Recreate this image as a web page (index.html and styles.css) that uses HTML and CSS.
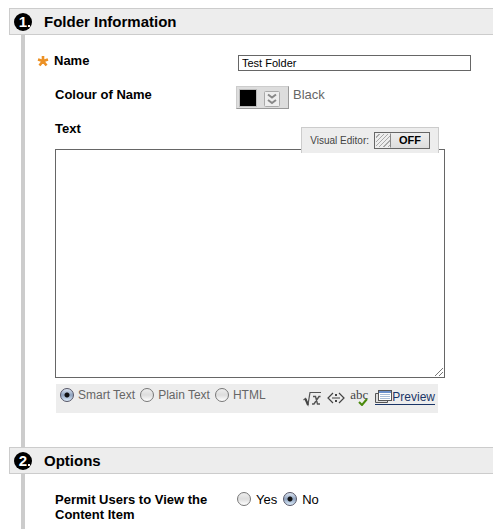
FILE: index.html
```html
<!DOCTYPE html>
<html lang="en">
<head>
<meta charset="utf-8">
<title>Folder</title>
<link rel="stylesheet" href="styles.css">
</head>
<body>
<form class="steps">
  <section class="step">
    <h2 class="step-title"><span class="step-number">1<i class="dot"></i></span>Folder Information</h2>
    <div class="step-body">
      <div class="row">
        <label class="label" for="name"><svg class="required" viewBox="0 0 12 12" aria-label="Required"><path d="M6 6V1M6 6L1 4.500M6 6L11 4.500M6 6L2.500 10.500M6 6L9.500 10.500" stroke="#ec9125" stroke-width="2.600" fill="none"/></svg>Name</label>
        <div class="field"><input class="name-input" id="name" type="text" value="Test Folder"></div>
      </div>
      <div class="row">
        <span class="label" id="colour-label">Colour of Name</span>
        <div class="field colour-field">
          <button class="colour-button" type="button" aria-labelledby="colour-label">
            <span class="swatch"></span>
            <svg class="chevrons" viewBox="0 0 16 16"><rect x=".5" y=".5" width="15" height="15" rx="1" fill="#eee" stroke="#aaa"/><path d="M4 3.500l4 3 4-3M4 9l4 3 4-3" fill="none" stroke="#888" stroke-width="2"/></svg>
          </button>
          <span class="colour-name">Black</span>
        </div>
      </div>
      <div class="editor">
        <label class="label" for="text">Text</label>
        <div class="visual-editor"><span>Visual Editor:</span><button class="toggle" type="button"><span class="grip"></span><b class="state">OFF</b></button></div>
        <div class="text-wrap">
          <textarea class="text-area" id="text"></textarea>
          <svg class="resize" viewBox="0 0 10 10"><path d="M1 9L9 1M5 9L9 5" stroke="#777" fill="none"/></svg>
        </div>
        <div class="toolbar">
          <label class="choice"><input class="radio" type="radio" name="format" checked>Smart Text</label>
          <label class="choice"><input class="radio" type="radio" name="format">Plain Text</label>
          <label class="choice"><input class="radio" type="radio" name="format">HTML</label>
          <div class="tools">
            <svg class="tool-root" viewBox="0 0 19 17"><path d="M0.500 10l2-1.500 2.500 6L7 2.500H18" fill="none" stroke="#555" stroke-width="1.200"/><path d="M2.500 9l2.500 6" stroke="#444" stroke-width="2"/><path d="M10 6.500h2.500l2 7.500H17M17.500 6.500h-1.500L11 14H9" fill="none" stroke="#555" stroke-width="1.400"/></svg>
            <svg class="tool-math" viewBox="0 0 18 12"><path d="M6 1L1 6l5 5M12 1l5 5-5 5M5 6h8" fill="none" stroke="#444" stroke-width="1.200"/><path d="M8 2h2v2H8zM8 8h2v2H8z" fill="#444"/></svg>
            <span class="tool-spell">abc<svg class="tick" viewBox="0 0 10 8"><path d="M1 4l3 3 5-6" fill="none" stroke="#4a8a0c" stroke-width="2"/></svg></span>
            <a class="preview" href="#"><svg class="tool-preview" viewBox="0 0 17 14"><path d="M3.500 3.500H.500v9h12V11" fill="#ddd" stroke="#555"/><rect x="3.500" y=".5" width="13" height="10" fill="#fff" stroke="#555"/><path d="M4 2h12" stroke="#6a8fcb" stroke-width="2"/><path d="M5 4.500h10M5 6.500h10M5 8.500h10" stroke="#a9bdd8"/></svg>Preview</a>
          </div>
        </div>
      </div>
    </div>
  </section>
  <section class="step">
    <h2 class="step-title"><span class="step-number">2<i class="dot"></i></span>Options</h2>
    <div class="step-body">
      <div class="row">
        <span class="label">Permit Users to View the Content Item</span>
        <div class="field view-field">
          <label class="choice"><input class="radio" type="radio" name="view">Yes</label>
          <label class="choice"><input class="radio" type="radio" name="view" checked>No</label>
        </div>
      </div>
    </div>
  </section>
</form>
</body>
</html>
```
FILE: styles.css
```css
* { box-sizing: border-box; }
body {
  margin: 0;
  background: #fff;
  color: #000;
  font: 13px/15px "Liberation Sans", Arial, sans-serif;
}
.steps {
  display: flex;
  flex-direction: column;
  min-height: 100vh;
  padding: 8px 0 0 9px;
}
.step:last-child { flex: 1; display: flex; flex-direction: column; }
.step:last-child .step-body { flex: 1; padding-bottom: 0; }
.step-title {
  display: flex;
  align-items: center;
  gap: 12px;
  height: 27px;
  margin: 0;
  padding-left: 4px;
  border: 1px solid #ccc;
  border-right: 0;
  background: #ededed;
  font-size: 15px;
  line-height: 16px;
}
.step-number {
  position: relative;
  width: 18px;
  height: 18px;
  border-radius: 50%;
  background: #000;
  color: #fff;
  line-height: 18px;
  text-align: center;
}
.dot {
  position: absolute;
  right: 2px;
  bottom: 4px;
  width: 2px;
  height: 2px;
  background: #fff;
}
.step-body {
  margin-left: 12px;
  padding: 18px 22px 34px 30px;
  border-left: 4px solid #ccc;
}
.row {
  display: grid;
  grid-template-columns: 181px 1fr;
  min-height: 34px;
}
.label { font-weight: bold; }
.required {
  width: 12px;
  height: 12px;
  margin: 0 5px -2px -18px;
}
.name-input {
  display: block;
  width: 100%;
  max-width: 233px;
  height: 16px;
  margin: 2px 0 0 2px;
  padding: 0 3px;
  border: 1px solid #666;
  font: 11px/14px "Liberation Sans", Arial, sans-serif;
}
.colour-field {
  display: flex;
  align-items: flex-start;
  gap: 4px;
  color: #666;
}
.colour-button {
  display: flex;
  align-items: center;
  gap: 7px;
  width: 53px;
  height: 23px;
  margin-top: -1px;
  padding: 0 2px;
  border: 1px solid;
  border-color: #ccc #999 #999 #ccc;
  background: #ddd;
}
.swatch {
  width: 18px;
  height: 18px;
  border: 1px solid #bbb;
  background: #000;
}
.chevrons { width: 16px; height: 16px; margin-top: 3px; }
.editor { position: relative; max-width: 390px; }
.editor > .label { display: block; margin-bottom: 13px; }
.visual-editor {
  position: absolute;
  z-index: 1;
  top: 6px;
  right: 6px;
  display: flex;
  align-items: center;
  gap: 5px;
  height: 26px;
  padding: 0 8px;
  border: 1px solid #ccc;
  border-bottom: 0;
  background: #ededed;
  color: #444;
  font-size: 10px;
}
.toggle {
  display: flex;
  width: 56px;
  height: 17px;
  padding: 0;
  border: 1px solid #666;
  background: linear-gradient(#eee, #ddd);
  font: 11px/15px "Liberation Sans", Arial, sans-serif;
}
.grip {
  width: 16px;
  height: 15px;
  border: 1px solid #eee;
  border-right-color: #888;
  background: repeating-linear-gradient(135deg, #eee 0 2px, #aaa 2px 3px);
}
.state { flex: 1; color: #000; }
.text-wrap { position: relative; }
.text-area {
  display: block;
  width: 100%;
  height: 229px;
  border: 1px solid #666;
  resize: none;
}
.resize {
  position: absolute;
  right: 1px;
  bottom: 1px;
  width: 10px;
  height: 10px;
}
.toolbar {
  display: flex;
  align-items: flex-start;
  gap: 5px;
  height: 29px;
  margin: 6px 7px 0 1px;
  padding: 4px 3px 0 4px;
  background: #ededed;
  color: #666;
  font-size: 12px;
}
.choice { display: flex; gap: 4px; white-space: nowrap; }
.radio {
  appearance: none;
  flex: none;
  width: 14px;
  height: 14px;
  margin: 0;
  border: 1px solid #777;
  border-radius: 50%;
  background: linear-gradient(#eee, #ddd 50%, #fff);
}
.radio:checked {
  border-color: #556;
  background: radial-gradient(circle, #111 0 2px, transparent 3px), linear-gradient(#dde6f2, #8fa3bf 50%, #dcecfb);
}
.tools {
  display: flex;
  align-items: flex-start;
  gap: 5px;
  margin-left: auto;
}
.tool-root { width: 19px; height: 17px; margin-top: 2px; }
.tool-math { width: 18px; height: 12px; margin-top: 4px; }
.tool-spell {
  position: relative;
  margin-right: 2px;
  color: #444;
  font: 13px/13px "Liberation Serif", serif;
}
.tick {
  position: absolute;
  right: 0;
  bottom: -5px;
  width: 10px;
  height: 8px;
}
.preview {
  display: flex;
  margin-top: 2px;
  border-bottom: 1px solid #1a3567;
  color: #1a3567;
  line-height: 14px;
  text-decoration: none;
}
.tool-preview { width: 17px; height: 14px; }
.view-field { display: flex; gap: 6px; padding-left: 1px; }
.view-field .choice { gap: 5px; }
```
